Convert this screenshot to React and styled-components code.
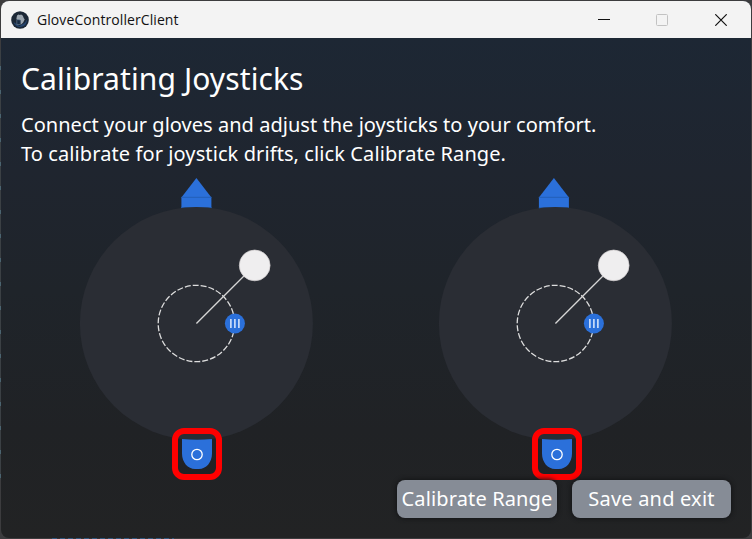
import React from "react";
import styled, { createGlobalStyle } from "styled-components";

const GlobalStyle = createGlobalStyle`
  * { box-sizing: border-box; }
  body { margin: 0; background: #29292b; overflow: hidden; }
`;

const Desktop = styled.div`
  width: 752px;
  height: 539px;
  padding: 1px;
  background:
    repeating-linear-gradient(90deg, #31587f 0 5px, #353537 5px 8px) 52px 538px / 122px 1px no-repeat,
    repeating-linear-gradient(#3b4044 0 16px, #4b6470 16px 20px, #3b4044 20px 24px) 0 50px / 1px 430px no-repeat,
    #3c3c3e;
  font-family: "Noto Sans", "Open Sans", sans-serif;
`;

const Window = styled.main`
  height: 537px;
  display: flex;
  flex-direction: column;
  border-radius: 8px;
  overflow: hidden;
  background: linear-gradient(#1d2734 0, #1d2734 37px, #1f252f 170px, #1f242a 290px, #202225 430px, #222324 537px);
`;

const TitleBar = styled.header`
  flex: none;
  height: 37px;
  display: flex;
  align-items: center;
  background: #f3f3f3;
  color: #111;
`;

const AppIcon = styled.svg`
  width: 18px;
  height: 18px;
  margin-left: 10px;
`;

const AppName = styled.span`
  margin-left: 8px;
  flex: 1;
  font: 14px/20px "Open Sans", "Noto Sans", sans-serif;
  letter-spacing: 0.08px;
`;

const CaptionButton = styled.button`
  width: ${(p) => p.$width || 58}px;
  height: 37px;
  padding: 0;
  border: 0;
  background: none;
  display: grid;
  place-items: center;
  color: ${(p) => (p.$muted ? "#c2c2c2" : "#111")};
`;

const CaptionButtons = styled.div`
  display: flex;
`;

const Body = styled.section`
  flex: 1;
  display: flex;
  flex-direction: column;
  color: #fff;
`;

const Title = styled.h1`
  margin: 20px 0 0 20px;
  height: 42px;
  font-size: 30px;
  font-weight: 400;
  line-height: 42px;
  letter-spacing: ${(p) => p.$tracking}px;
  white-space: nowrap;
`;

const Copy = styled.p`
  margin: 10px 0 0 20px;
  height: 58px;
  font-size: 20px;
  line-height: 29px;
  white-space: nowrap;
`;

const Line = styled.span`
  display: block;
  letter-spacing: ${(p) => p.$tracking}px;
`;

const Joysticks = styled.div`
  display: grid;
  grid-template-columns: 359px 359px;
  height: 311px;
  margin-top: 2px;
`;

const Dial = styled.svg`
  display: block;
  width: 359px;
  height: 311px;
`;

const Actions = styled.footer`
  display: flex;
  justify-content: flex-end;
  gap: 15px;
  margin: -1px 20px 0 0;
`;

const ActionButton = styled.button`
  width: ${(p) => p.$width}px;
  height: 38px;
  padding: 0;
  border: 0;
  border-radius: 8px;
  background: #868c96;
  box-shadow: 0 0 4px 1px #141517;
  color: #fff;
  font: 20px/38px "Noto Sans", sans-serif;
  letter-spacing: ${(p) => p.$tracking}px;
  white-space: nowrap;
`;

/* Each dial is drawn with its centre at the origin. */
function Joystick({ cx, arrow, base, label }) {
  return (
    <Dial viewBox="0 0 359 311" role="img" aria-label={label}>
      <g transform={`translate(${cx} 153.5)`}>
        <g transform={`translate(${arrow} 0)`} fill="#2b70da">
          <path d="M0-145.5 15-126v14h-30v-14z" />
          <path d="M-15-126.2H15M-15-115.9H15" stroke="#2360b7" />
        </g>
        <circle r="116.5" fill="#2a2d34" />
        <circle
          r="38.2"
          fill="none"
          stroke="#dedede"
          strokeWidth="1.3"
          strokeDasharray="6 2"
        />
        <path d="M0 0 58.3-58.3" stroke="#d6d6d6" strokeWidth="1.3" />
        <circle cx="58.3" cy="-58.1" r="15.4" fill="#efeeef" stroke="#d2cfd0" strokeWidth=".7" />
        <circle cx="38.5" r="10" fill="#2b70da" />
        <path d="M34.5-4.5v9M38.5-4.5v9M42.5-4.5v9" stroke="#eaf2ff" strokeWidth="1.4" />
        <g transform={`translate(${base} 0)`}>
          <rect x="-22" y="107.5" width="44" height="46" rx="9" fill="none" stroke="#f00" strokeWidth="6" />
          <path
            d="M-15 115.5Q0 117 15 115.5V130C15 139 9 145.5 2 145.5H-2C-9 145.5-15 139-15 130Z"
            fill="#2b70da"
          />
          <circle cy="131" r="5.2" fill="none" stroke="#fff" strokeWidth="1.3" />
        </g>
      </g>
    </Dial>
  );
}

export default function App() {
  return (
    <Desktop>
      <GlobalStyle />
      <Window>
        <TitleBar>
          <AppIcon viewBox="0 0 18 18">
            <circle cx="9" cy="9" r="8.8" fill="#1b2736" />
            <path d="M2.5 11a7 7 0 0 0 12.500 2l1.500-5-3 4-5 3z" fill="#24436d" />
            <path d="M5.400 7.800 6 4.400l1.600-1 1.100.6 1.500-.5 1.700 1.200.8 2.300 1 1.600-1.700 3.200-2 1.800-.5-4.600-3.300-.1z" fill="#9ba5af" />
            <path d="M5.800 8.500v5h3.600v-4.500z" fill="#172a43" stroke="#6b8397" strokeWidth=".6" />
          </AppIcon>
          <AppName>GloveControllerClient</AppName>
          <CaptionButtons>
            <CaptionButton aria-label="Minimize">
              <svg width="12" height="12"><path d="M0 5.5h12" stroke="currentColor" /></svg>
            </CaptionButton>
            <CaptionButton $muted aria-label="Maximize">
              <svg width="12" height="12"><rect x=".5" y=".5" width="11" height="11" rx="1" fill="none" stroke="currentColor" /></svg>
            </CaptionButton>
            <CaptionButton $width={60} aria-label="Close">
              <svg width="12" height="12"><path d="m.3.3 11.4 11.4m0-11.4L.3 11.7" stroke="currentColor" strokeWidth="1.2" /></svg>
            </CaptionButton>
          </CaptionButtons>
        </TitleBar>
        <Body>
          <Title $tracking={0.1}>Calibrating Joysticks</Title>
          <Copy>
            <Line $tracking={0.035}>Connect your gloves and adjust the joysticks to your comfort.</Line>
            <Line $tracking={0.095}>To calibrate for joystick drifts, click Calibrate Range.</Line>
          </Copy>
          <Joysticks>
            <Joystick cx={195.4} arrow={0} base={0.6} label="Left joystick" />
            <Joystick cx={195.4} arrow={-1.5} base={1.6} label="Right joystick" />
          </Joysticks>
          <Actions>
            <ActionButton $width={160} $tracking={0.14}>Calibrate Range</ActionButton>
            <ActionButton $width={159} $tracking={0.2}>Save and exit</ActionButton>
          </Actions>
        </Body>
      </Window>
    </Desktop>
  );
}
